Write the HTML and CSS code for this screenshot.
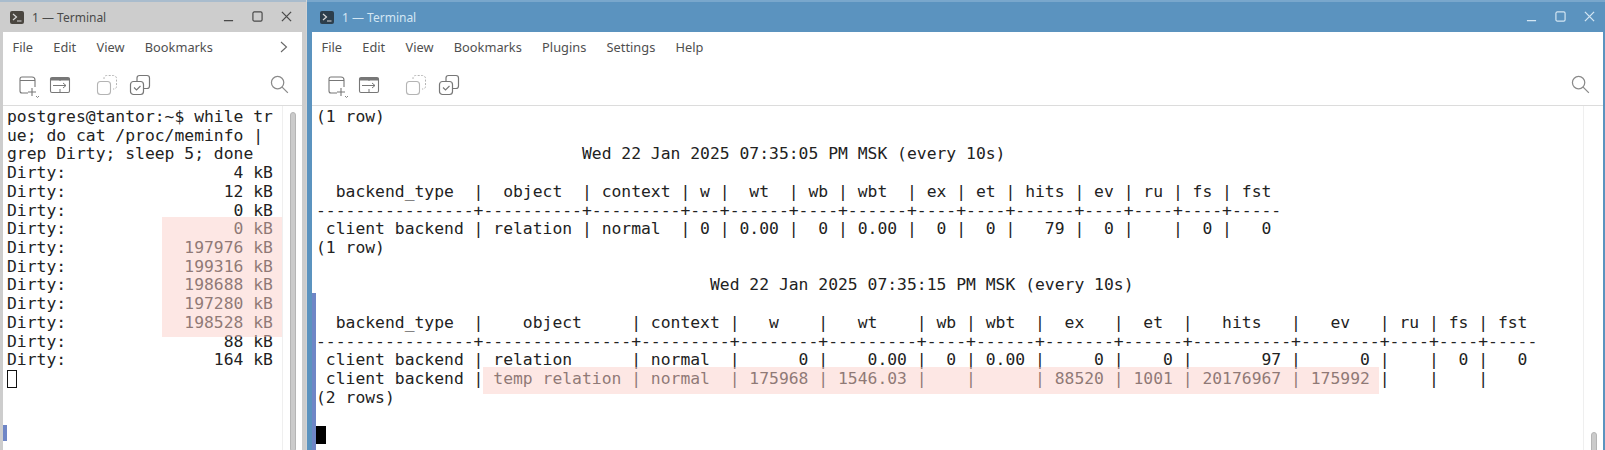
FILE: index.html
```html
<!DOCTYPE html>
<html lang="en">
<head>
<meta charset="utf-8">
<title>Terminal</title>
<link rel="stylesheet" href="styles.css">
</head>
<body>
<svg class="defs" width="0" height="0" aria-hidden="true">
  <symbol id="i-term" viewBox="0 0 14 13"><rect x="0" y="0" width="14" height="13" rx="2" fill="currentColor"/><path d="M3 3l3.5 3L3 9M7 10h4.5" fill="none" stroke="#d8d8d8" stroke-width="1.2"/></symbol>
  <symbol id="i-new" viewBox="0 0 22 24"><path d="M10 19H4a2 2 0 0 1-2-2V5a2 2 0 0 1 2-2h10a3 3 0 0 1 3 3v7M2.500 6.500h14" fill="none" stroke="currentColor" stroke-width="1.1"/><path d="M14 14v8M10 18h8" fill="none" stroke="currentColor" stroke-width="1.1"/><path d="M18 22l1.500 1.500L21 22" fill="none" stroke="currentColor" stroke-width=".9"/></symbol>
  <symbol id="i-split" viewBox="0 0 22 20"><rect x="1.500" y="2.500" width="19" height="15" rx="1.500" fill="none" stroke="currentColor" stroke-width="1.1"/><path d="M1.500 3h19v2.500h-19z" fill="currentColor"/><path d="M11 3v3M11 14v3.500M4 10.500h13M14 8l3 2.500-3 2.500" fill="none" stroke="currentColor" stroke-width="1"/></symbol>
  <symbol id="i-copy-off" viewBox="0 0 22 22"><rect x="1.500" y="7.500" width="13" height="13" rx="3" fill="none" stroke="currentColor" stroke-width="1.100"/><path d="M8 5V4a2.500 2.500 0 0 1 2.500-2.500h7A3 3 0 0 1 20.500 4.500v8a2.500 2.500 0 0 1-2.500 2.500h-1" fill="none" stroke="currentColor" stroke-width="1" stroke-dasharray="2 1.500"/></symbol>
  <symbol id="i-copy-on" viewBox="0 0 22 22"><rect x="1.500" y="7.500" width="13" height="13" rx="3" fill="none" stroke="currentColor" stroke-width="1.200"/><path d="M8 7V4a2.500 2.500 0 0 1 2.500-2.500h7.500A2.500 2.500 0 0 1 20.500 4v8a2.500 2.500 0 0 1-2.500 2.500h-3" fill="none" stroke="currentColor" stroke-width="1.200"/><path d="M5 13.500l2.500 2.500 4-4" fill="none" stroke="currentColor" stroke-width="1.100"/></symbol>
  <symbol id="i-search" viewBox="0 0 20 20"><circle cx="8" cy="8" r="6.500" fill="none" stroke="currentColor" stroke-width="1.300"/><path d="M12.800 12.800l6 6" fill="none" stroke="currentColor" stroke-width="1.300"/></symbol>
  <symbol id="i-min" viewBox="0 0 12 12"><path d="M1 10.500h10" stroke="currentColor" stroke-width="1.400"/></symbol>
  <symbol id="i-max" viewBox="0 0 12 12"><rect x="1" y="1" width="10" height="10" rx="1.500" fill="none" stroke="currentColor" stroke-width="1.300"/></symbol>
  <symbol id="i-close" viewBox="0 0 12 12"><path d="M1 1l10 10M11 1L1 11" stroke="currentColor" stroke-width="1.400"/></symbol>
</svg>

<div class="desk">
  <section class="win win-left">
    <header class="titlebar">
      <svg class="t-icon"><use href="#i-term"/></svg>
      <span class="t-text">1 — Terminal</span>
      <span class="t-buttons">
        <svg class="t-btn"><use href="#i-min"/></svg>
        <svg class="t-btn"><use href="#i-max"/></svg>
        <svg class="t-btn"><use href="#i-close"/></svg>
      </span>
    </header>
    <div class="body">
      <nav class="menubar">
        <span>File</span><span>Edit</span><span>View</span><span>Bookmarks</span>
        <svg class="more" viewBox="0 0 8 12"><path d="M1 1l5.500 5L1 11" fill="none" stroke="currentColor" stroke-width="1.100"/></svg>
      </nav>
      <div class="toolbar">
        <svg class="tool tool-new"><use href="#i-new"/></svg>
        <svg class="tool tool-split"><use href="#i-split"/></svg>
        <svg class="tool tool-off"><use href="#i-copy-off"/></svg>
        <svg class="tool tool-on"><use href="#i-copy-on"/></svg>
        <svg class="tool tool-search"><use href="#i-search"/></svg>
      </div>
      <div class="term">
<pre class="screen">postgres@tantor:~$ while tr
ue; do cat /proc/meminfo |
grep Dirty; sleep 5; done
Dirty:                 4 kB
Dirty:                12 kB
Dirty:                 0 kB
Dirty:                 0 kB
Dirty:            197976 kB
Dirty:            199316 kB
Dirty:            198688 kB
Dirty:            197280 kB
Dirty:            198528 kB
Dirty:                88 kB
Dirty:               164 kB
<span class="cursor-hollow"> </span></pre>
        <div class="hl hl-left"></div>
        <div class="accent accent-left"></div>
        <div class="scroll"><div class="thumb thumb-left"></div></div>
      </div>
    </div>
  </section>

  <section class="win win-right">
    <header class="titlebar">
      <svg class="t-icon"><use href="#i-term"/></svg>
      <span class="t-text">1 — Terminal</span>
      <span class="t-buttons">
        <svg class="t-btn"><use href="#i-min"/></svg>
        <svg class="t-btn"><use href="#i-max"/></svg>
        <svg class="t-btn"><use href="#i-close"/></svg>
      </span>
    </header>
    <div class="body">
      <nav class="menubar">
        <span>File</span><span>Edit</span><span>View</span><span>Bookmarks</span><span>Plugins</span><span>Settings</span><span>Help</span>
      </nav>
      <div class="toolbar">
        <svg class="tool tool-new"><use href="#i-new"/></svg>
        <svg class="tool tool-split"><use href="#i-split"/></svg>
        <svg class="tool tool-off"><use href="#i-copy-off"/></svg>
        <svg class="tool tool-on"><use href="#i-copy-on"/></svg>
        <svg class="tool tool-search"><use href="#i-search"/></svg>
      </div>
      <div class="term">
<pre class="screen">(1 row)

                           Wed 22 Jan 2025 07:35:05 PM MSK (every 10s)

  backend_type  |  object  | context | w |  wt  | wb | wbt  | ex | et | hits | ev | ru | fs | fst 
----------------+----------+---------+---+------+----+------+----+----+------+----+----+----+-----
 client backend | relation | normal  | 0 | 0.00 |  0 | 0.00 |  0 |  0 |   79 |  0 |    |  0 |   0
(1 row)

                                        Wed 22 Jan 2025 07:35:15 PM MSK (every 10s)

  backend_type  |    object     | context |   w    |   wt    | wb | wbt  |  ex   |  et  |   hits   |   ev   | ru | fs | fst 
----------------+---------------+---------+--------+---------+----+------+-------+------+----------+--------+----+----+-----
 client backend | relation      | normal  |      0 |    0.00 |  0 | 0.00 |     0 |    0 |       97 |      0 |    |  0 |   0
 client backend | temp relation | normal  | 175968 | 1546.03 |    |      | 88520 | 1001 | 20176967 | 175992 |    |    |    
(2 rows)

<span class="cursor-solid"> </span></pre>
        <div class="hl hl-right"></div>
        <div class="accent accent-right"></div>
        <div class="scroll"><div class="thumb thumb-right"></div></div>
      </div>
    </div>
  </section>
</div>
</body>
</html>
```
FILE: styles.css
```css
* { box-sizing: border-box; }
html, body { margin: 0; padding: 0; height: 100%; overflow: hidden; background: #d4d4d4; }
.defs { position: absolute; }

.desk { display: flex; height: 450px; width: 1605px; }
.win { display: flex; flex-direction: column; height: 450px; font-family: "Noto Sans", sans-serif; }
.win-left { width: 306px; flex: none; background: #cdcdcd; color: #4a4a4a; padding: 0 4px 0 3px; border-top: 2px solid #a9bccd; margin-right: 1px; }
.win-right { flex: 1; background: #5b93bf; color: #d3e6f3; padding: 0 2px 0 5px; border-top: 2px solid #79a7cc; }

.titlebar { display: flex; align-items: center; height: 30px; flex: none; font-size: 12px; padding-top: 1px; }
.t-icon { width: 14px; height: 13px; margin-left: 7px; margin-right: 8px; color: #4a4640; margin-top: -1px; }
.win-right .t-icon { margin-left: 8px; margin-right: 8px; color: #2c3e4c; }
.t-text { white-space: nowrap; }
.t-buttons { margin-left: auto; display: flex; gap: 18px; align-items: center; padding-right: 10px; margin-top: -2px; }
.win-right .t-buttons { padding-right: 8px; }
.t-btn { width: 11px; height: 11px; }

.body { flex: 1; min-height: 0; background: #fff; display: flex; flex-direction: column; color: #4d4d4d; }
.menubar { display: flex; align-items: center; gap: 20.300px; height: 32px; flex: none; padding-left: 9.500px; padding-bottom: 2px; font-size: 12.800px; color: #4f4f4f; }
.more { width: 8px; height: 12px; margin-left: auto; margin-right: 14px; color: #666; }
.toolbar { display: flex; align-items: center; height: 42px; flex: none; padding-left: 15px; border-bottom: 1px solid #dcdcdc; color: #777; }
.tool { flex: none; }
.tool-new { width: 22px; height: 24px; margin-right: 9px; margin-top: 2px; }
.tool-split { width: 22px; height: 20px; margin-right: 25px; }
.tool-off { width: 22px; height: 22px; margin-right: 11px; color: #b4b4b4; }
.tool-on { width: 22px; height: 22px; color: #777; }
.tool-search { width: 19px; height: 19px; margin-left: auto; margin-right: 13px; color: #8a8a8a; }

.term { flex: 1; min-height: 0; position: relative; display: flex; overflow: hidden; }
.screen { flex: 1; margin: 0; padding: 2px 0 0 4px; font-family: "DejaVu Sans Mono", monospace; font-size: 16.380px; line-height: 18.720px; color: #222; }
.cursor-hollow { display: inline-block; width: 10px; height: 18px; outline: 1px solid #111; outline-offset: -1px; vertical-align: 0; }
.cursor-solid { display: inline-block; width: 10px; height: 18px; background: #000; vertical-align: 0; }

.hl { position: absolute; background: rgba(251, 208, 202, .5); }
.hl-left { left: 159px; top: 111px; width: 121px; height: 120px; }
.hl-right { left: 171px; top: 261px; width: 896px; height: 27px; }

.accent { position: absolute; left: 0; background: #6f86c6; width: 4px; }
.accent-left { top: 319px; height: 16px; }
.accent-right { top: 187px; height: 158px; }

.scroll { position: absolute; top: 0; bottom: 0; right: 0; width: 20px; border-left: 1px solid #efefef; display: flex; justify-content: center; }
.thumb { width: 6px; border-radius: 3px; background: #cbcbcb; border: 1px solid #b5b5b5; }
.thumb-left { margin-top: 6px; height: 340px; }
.thumb-right { margin-top: 326px; height: 30px; }
```
